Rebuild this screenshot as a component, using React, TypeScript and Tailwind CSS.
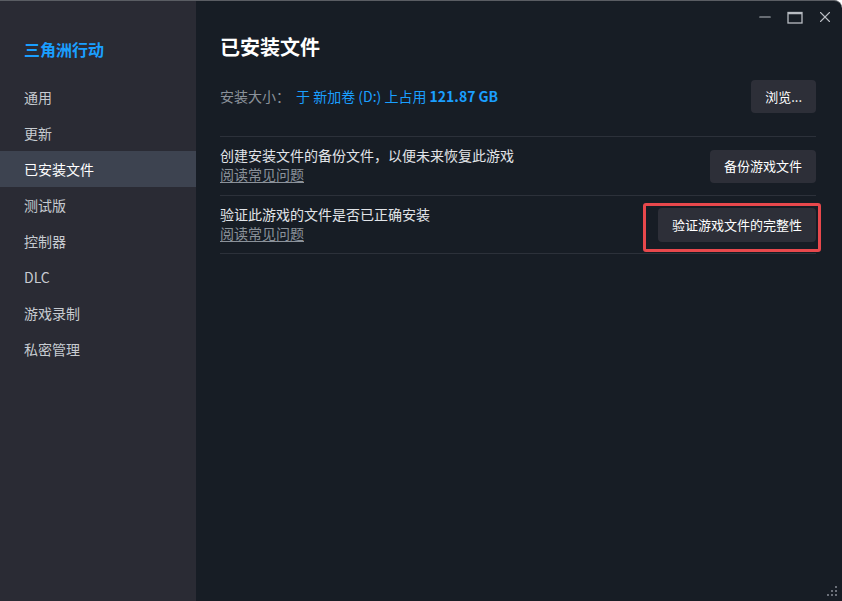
import { Minus, X } from 'lucide-react';

const navItems = ['通用', '更新', '已安装文件', '测试版', '控制器', 'DLC', '游戏录制', '私密管理'];

const font = { fontFamily: '"Noto Sans CJK SC", "Noto Sans", sans-serif' };

function FaqLink() {
  return (
    <a className="text-[14px] leading-[19px] text-[#8b929a] underline underline-offset-2 decoration-[#8b929a]">
      阅读常见问题
    </a>
  );
}

export default function App() {
  return (
    <div
      className="w-[842px] h-[601px] flex overflow-hidden bg-[#171d25] border-t border-[#5a5d63] rounded-tr-lg"
      style={font}
    >
      {/* 侧边栏 */}
      <aside className="w-[196px] shrink-0 bg-[#2a2b34] flex flex-col pt-[36px]">
        <div className="px-6 text-[16px] font-bold text-[#1a9fff] leading-[24px]">三角洲行动</div>
        <nav className="mt-[18px] flex flex-col">
          {navItems.map((item) => (
            <div
              key={item}
              className={
                item === '已安装文件'
                  ? 'h-9 px-6 flex items-center text-[14px] text-white bg-[#3d4350]'
                  : 'h-9 px-6 flex items-center text-[14px] text-[#c7cbd1]'
              }
            >
              {item}
            </div>
          ))}
        </nav>
      </aside>

      {/* 主内容 */}
      <main className="flex-1 flex flex-col relative">
        <div className="h-[32px] flex items-center justify-end gap-[13px] pr-[8px] text-[#b8bcc2]">
          <Minus size={18} strokeWidth={1.5} />
          <svg width="16" height="13" viewBox="0 0 16 13" fill="none" stroke="currentColor">
            <rect x="1" y="1.5" width="14" height="10.5" strokeWidth="1.3" />
            <line x1="1" y1="2.5" x2="15" y2="2.5" strokeWidth="1.5" />
          </svg>
          <X size={18} strokeWidth={1.5} />
        </div>

        <div className="pl-6 pr-[26px]">
          <h1 className="text-[20px] font-bold text-white leading-[28px]">已安装文件</h1>

          <div className="mt-[19px] flex items-center justify-between h-[33px]">
            <div className="text-[14px]">
              <span className="text-[#8b929a]">安装大小：</span>
              <span className="ml-[6px] text-[#1a9fff]">
                于 新加卷 (D:) 上占用 <span className="font-bold">121.87 GB</span>
              </span>
            </div>
            <button className="h-[33px] px-[14px] bg-[#2d2f38] text-[13px] text-white rounded-sm">浏览...</button>
          </div>

          <div className="mt-[23px] border-t border-[#2c313a]" />

          <div className="flex items-center justify-between h-[58px]">
            <div className="flex flex-col -mt-[2px]">
              <span className="text-[14px] leading-[19px] text-[#e1e4e8]">创建安装文件的备份文件，以便未来恢复此游戏</span>
              <FaqLink />
            </div>
            <button className="h-[33px] px-[14px] bg-[#2d2f38] text-[13px] text-white rounded-sm">备份游戏文件</button>
          </div>

          <div className="border-t border-[#2c313a]" />

          <div className="flex items-center justify-between h-[57px]">
            <div className="flex flex-col -mt-[2px]">
              <span className="text-[14px] leading-[19px] text-[#e1e4e8]">验证此游戏的文件是否已正确安装</span>
              <FaqLink />
            </div>
            <div className="relative">
              <button className="h-[34px] px-[14px] bg-[#2d2f38] text-[13px] text-white rounded-sm">
                验证游戏文件的完整性
              </button>
              <div className="absolute -left-[15px] -right-[5px] -top-[5px] -bottom-[10px] border-[3px] border-[#e8484c] rounded-[3px] pointer-events-none" />
            </div>
          </div>

          <div className="border-t border-[#2c313a]" />
        </div>

        {/* 调整大小手柄 */}
        <svg className="absolute right-[3px] bottom-[3px]" width="14" height="14" viewBox="0 0 14 14">
          <rect x="10" y="2" width="2" height="2" fill="#6b7079" />
          <rect x="6" y="6" width="2" height="2" fill="#6b7079" />
          <rect x="10" y="6" width="2" height="2" fill="#6b7079" />
          <rect x="2" y="10" width="2" height="2" fill="#6b7079" />
          <rect x="6" y="10" width="2" height="2" fill="#6b7079" />
          <rect x="10" y="10" width="2" height="2" fill="#6b7079" />
        </svg>
      </main>
    </div>
  );
}
